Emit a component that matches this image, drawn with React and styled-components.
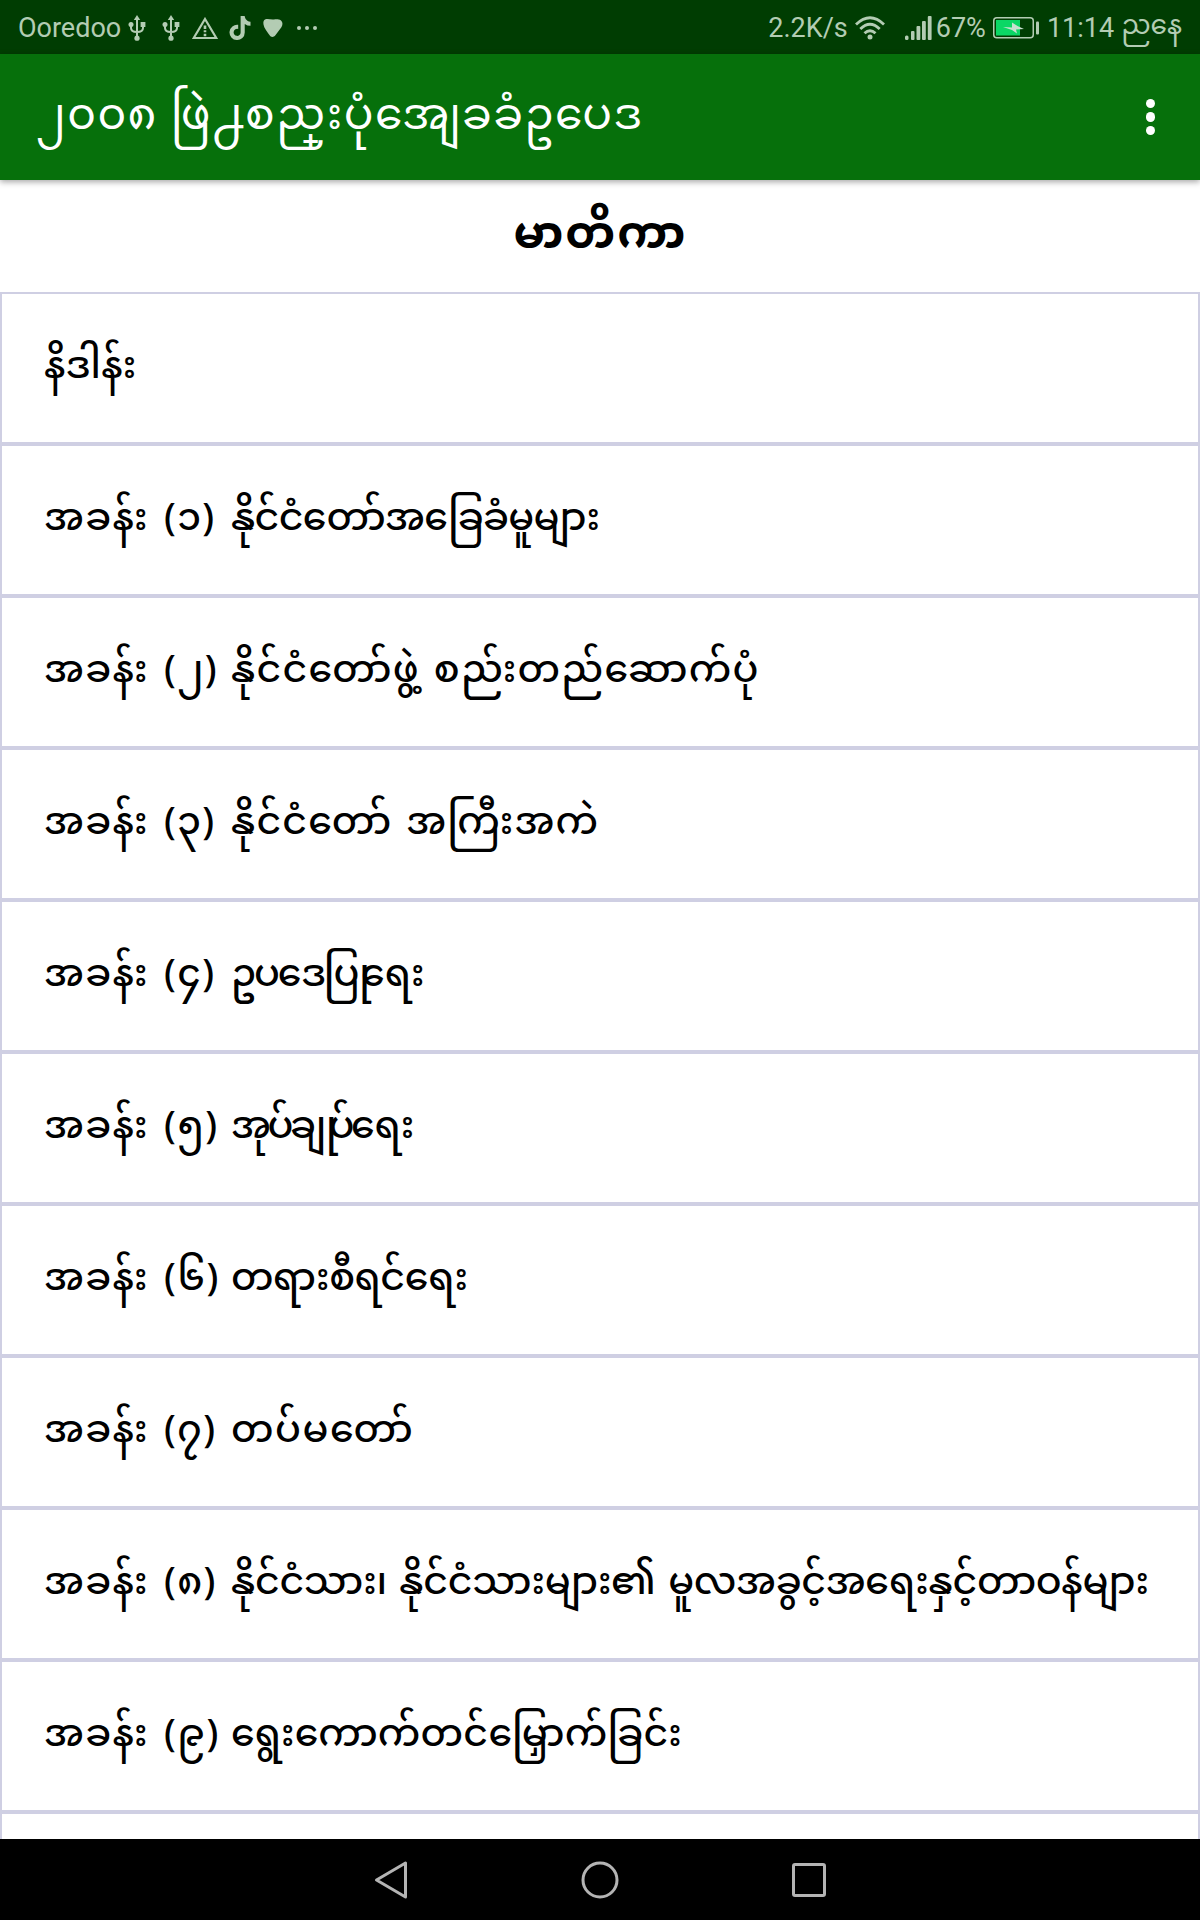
import React from 'react';
import styled, { createGlobalStyle } from 'styled-components';
import { FaTiktok } from 'react-icons/fa6';

const GlobalStyle = createGlobalStyle`
  * { box-sizing: border-box; }
  body { margin: 0; background: #fff; font-family: 'Noto Sans Myanmar', 'Noto Sans', sans-serif; }
  svg { display: block; flex: none; }
`;

const Screen = styled.div`
  width: 1200px;
  height: 1920px;
  display: flex;
  flex-direction: column;
  overflow: hidden;
`;

const StatusBar = styled.div`
  flex: none;
  height: 54px;
  display: flex;
  align-items: center;
  justify-content: space-between;
  padding: 2px 18px 0;
  background: #003d02;
  color: #b3ccb3;
  font-family: Roboto, 'Noto Sans Myanmar', sans-serif;
  font-size: 27px;
`;

const StatusGroup = styled.div`
  display: flex;
  align-items: center;
`;

const Label = styled.span`
  white-space: nowrap;
  line-height: 32px;
  margin-left: ${({ $gap = 0 }) => $gap}px;
`;

const Daytime = styled(Label)`
  font-family: 'Noto Sans Myanmar', sans-serif;
  font-size: 26.5px;
  line-height: 50px;
`;

const IconSlot = styled.span`
  display: flex;
  margin-left: ${({ $gap = 0 }) => $gap}px;
`;

const AppBar = styled.header`
  flex: none;
  height: 126px;
  display: flex;
  align-items: center;
  justify-content: space-between;
  padding: 0 45px 0 36px;
  background: #06700b;
  color: #fff;
  box-shadow: 0 2px 6px rgba(0, 0, 0, 0.35);
  z-index: 1;
`;

const AppTitle = styled.h1`
  margin: 0;
  padding-top: 4px;
  font-size: 44px;
  font-weight: 400;
  letter-spacing: 1.5px;
  white-space: nowrap;
`;

const Visarga = styled.span`
  margin-left: -11px;
`;

const MenuButton = styled.button`
  display: flex;
  flex-direction: column;
  gap: 4px;
  padding: 0;
  border: 0;
  background: none;
`;

const Dot = styled.span`
  width: 9.5px;
  height: 9.5px;
  border-radius: 50%;
  background: #fff;
`;

const Heading = styled.h2`
  flex: none;
  height: 112px;
  margin: 0;
  padding: 3px 0 0 1px;
  display: flex;
  align-items: center;
  justify-content: center;
  font-size: 45px;
  font-weight: 700;
  letter-spacing: 2px;
`;

const List = styled.div`
  flex: 1;
  min-height: 0;
  overflow: hidden;
`;

const Row = styled.div`
  height: 152px;
  display: flex;
  align-items: center;
  padding: 3px 0 0 42px;
  border: 2px solid #cfcfe3;
  font-size: 38px;
  font-weight: 500;
  color: #000;
  white-space: nowrap;
`;

const Chapter = styled.span`
  width: 187px;
  flex: none;
  letter-spacing: 1.3px;
  word-spacing: 4px;
`;

const Title = styled.span`
  letter-spacing: ${({ $spacing = 0 }) => $spacing}px;
  word-spacing: 3px;
`;

const Tuck = styled.span`
  margin-left: -${({ $by }) => $by}px;
`;

const NavBar = styled.nav`
  flex: none;
  height: 81px;
  display: flex;
  align-items: center;
  justify-content: center;
  gap: 173px;
  background: #000;
`;

const UsbIcon = () => (
  <svg width="18" height="26" viewBox="0 0 18 26" fill="none" stroke="currentColor" strokeWidth="2">
    <path d="M9 4v19M3 9v4q0 4 6 4q6 0 6-4V9" />
    <path d="M9 0l3.2 5H5.8z" fill="currentColor" stroke="none" />
    <circle cx="9" cy="23.2" r="2.6" fill="currentColor" stroke="none" />
    <circle cx="3" cy="9.5" r="2.5" fill="currentColor" stroke="none" />
    <path d="M12.6 7h4.8v5h-4.8z" fill="currentColor" stroke="none" />
  </svg>
);

const WarningIcon = () => (
  <svg width="26" height="23" viewBox="0 0 26 23" fill="none" stroke="currentColor" strokeWidth="2.2">
    <path d="M13 2L24.3 21H1.7z" />
    <path d="M13 8.5v3.5M13 13.2v2M13 16.8v2.4" strokeWidth="2.6" />
  </svg>
);

const HeartIcon = () => (
  <svg width="20" height="20" viewBox="0 0 20 20" fill="currentColor">
    <path d="M2.5 1.2C5 .4 8 1.8 11 1.4c2.500-.3 5-.3 7 1 2 1.600 1.800 4.600.4 6.800l-6 8c-1.600 2.200-4.400 2.400-5.800 0C4 13.500 1 10 .5 6.500.1 4 .5 2 2.500 1.200z" />
  </svg>
);

const MoreIcon = () => (
  <svg width="20" height="4" viewBox="0 0 20 4" fill="currentColor">
    <circle cx="2" cy="2" r="2" />
    <circle cx="10" cy="2" r="2" />
    <circle cx="18" cy="2" r="2" />
  </svg>
);

const WifiIcon = () => (
  <svg width="30" height="24" viewBox="0 0 30 24" fill="none" stroke="currentColor" strokeWidth="2.8">
    <path d="M1 8.5Q15-5 29 8.5M5.3 13Q15 3.5 24.7 13M9.5 17.3Q15 12 20.5 17.3" />
    <circle cx="15" cy="21" r="2.5" fill="currentColor" stroke="none" />
  </svg>
);

const SignalIcon = () => (
  <svg width="27" height="24" viewBox="0 0 27 24" fill="currentColor">
    <rect x="0" y="19.5" width="3.5" height="4.5" rx="1.5" />
    <rect x="6" y="15" width="3.5" height="9" rx="1" />
    <rect x="11.5" y="10" width="3.8" height="14" rx="1" />
    <rect x="17" y="5" width="3.8" height="19" rx="1" />
    <rect x="22.8" y="0" width="3.8" height="24" rx="1" />
  </svg>
);

const BatteryIcon = () => (
  <svg width="46" height="22" viewBox="0 0 46 22">
    <rect x="0.75" y="0.75" width="39.5" height="20" rx="3" fill="none" stroke="#b3ccb3" strokeWidth="1.5" />
    <rect x="3" y="3" width="24" height="15.5" fill="#0bd765" />
    <path d="M10 10l9 .5V5.500l5.500 3.500 6.500 3-8 .5 1 4-5-3.500z" fill="#c8e0cf" />
    <rect x="43" y="4.5" width="3" height="13" rx="1" fill="#b3ccb3" />
  </svg>
);

const BackIcon = () => (
  <svg width="34" height="40" viewBox="0 0 34 40" fill="none" stroke="#b4b4b4" strokeWidth="3" strokeLinejoin="round">
    <path d="M2.5 20L31.5 3v34z" />
  </svg>
);

const HomeIcon = () => (
  <svg width="38" height="38" viewBox="0 0 38 38" fill="none" stroke="#b4b4b4" strokeWidth="3">
    <circle cx="19" cy="19" r="17" />
  </svg>
);

const RecentIcon = () => (
  <svg width="34" height="34" viewBox="0 0 34 34" fill="none" stroke="#b4b4b4" strokeWidth="3">
    <rect x="1.5" y="1.5" width="31" height="31" rx="1.5" />
  </svg>
);

const rows = [
  { title: 'နိဒါန်း', spacing: 0.2 },
  { chapter: 'အခန်း (၁)', title: 'နိုင်ငံတော်အခြေခံမူများ', spacing: -0.7 },
  { chapter: 'အခန်း (၂)', title: 'နိုင်ငံတော်ဖွဲ\u00A0့စည်းတည်ဆောက်ပုံ', spacing: 1.2 },
  { chapter: 'အခန်း (၃)', title: 'နိုင်ငံတော် အကြီးအကဲ', spacing: 1.1 },
  { chapter: 'အခန်း (၄)', title: <>ဥပဒေပြု<Tuck $by={7}>ရေး</Tuck></>, spacing: -2.2 },
  { chapter: 'အခန်း (၅)', title: <>အုပ်ချု<Tuck $by={5}>ပ်ရေး</Tuck></>, spacing: -3.5 },
  { chapter: 'အခန်း (၆)', title: 'တရားစီရင်ရေး', spacing: -0.5 },
  { chapter: 'အခန်း (၇)', title: 'တပ်မတော်', spacing: 1.5 },
  { chapter: 'အခန်း (၈)', title: 'နိုင်ငံသား၊ နိုင်ငံသားများ၏ မူလအခွင့်အရေးနှင့်တာဝန်များ', spacing: -0.35 },
  { chapter: 'အခန်း (၉)', title: 'ရွေးကောက်တင်မြှောက်ခြင်း', spacing: 0.2 },
  { title: '' },
];

const App = () => (
  <>
    <GlobalStyle />
    <Screen>
      <StatusBar>
        <StatusGroup>
          <Label>Ooredoo</Label>
          <IconSlot $gap={7}><UsbIcon /></IconSlot>
          <IconSlot $gap={16}><UsbIcon /></IconSlot>
          <IconSlot $gap={12}><WarningIcon /></IconSlot>
          <IconSlot $gap={10}><FaTiktok size={24} /></IconSlot>
          <IconSlot $gap={11}><HeartIcon /></IconSlot>
          <IconSlot $gap={14}><MoreIcon /></IconSlot>
        </StatusGroup>
        <StatusGroup>
          <Label>2.2K/s</Label>
          <IconSlot $gap={7}><WifiIcon /></IconSlot>
          <IconSlot $gap={20}><SignalIcon /></IconSlot>
          <Label $gap={4}>67%</Label>
          <IconSlot $gap={7}><BatteryIcon /></IconSlot>
          <Label $gap={8}>11:14</Label>
          <Daytime $gap={7}>ညနေ</Daytime>
        </StatusGroup>
      </StatusBar>
      <AppBar>
        <AppTitle>
          ၂၀၀၈ ဖြဲ႕စည္<Visarga>{'\u00A0း'}</Visarga>ပုံအျေခခံဥပေဒ
        </AppTitle>
        <MenuButton aria-label="menu">
          <Dot />
          <Dot />
          <Dot />
        </MenuButton>
      </AppBar>
      <Heading>မာတိကာ</Heading>
      <List>
        {rows.map(({ chapter, title, spacing }, i) => (
          <Row key={i}>
            {chapter && <Chapter>{chapter}</Chapter>}
            <Title $spacing={spacing}>{title}</Title>
          </Row>
        ))}
      </List>
      <NavBar>
        <BackIcon />
        <HomeIcon />
        <RecentIcon />
      </NavBar>
    </Screen>
  </>
);

export default App;
